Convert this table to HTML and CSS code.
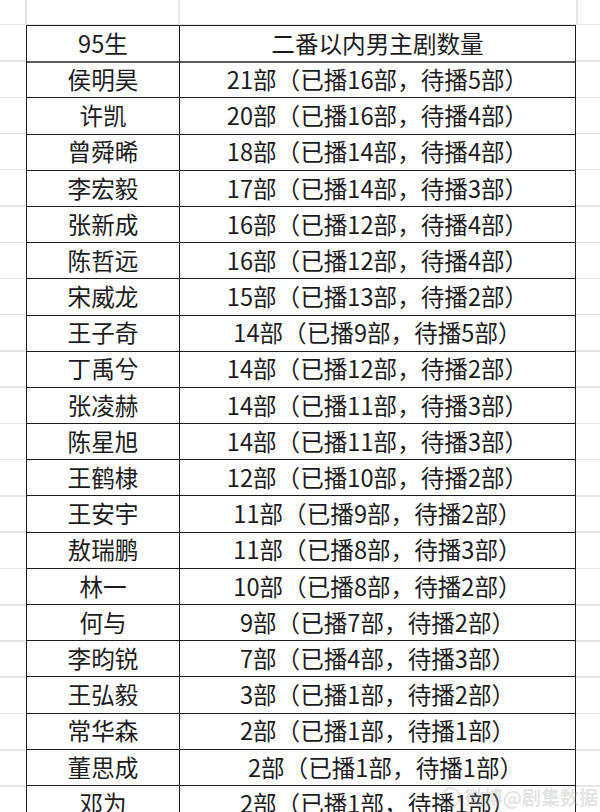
FILE: index.html
```html
<!DOCTYPE html>
<html lang="zh">
<head>
<meta charset="utf-8">
<title>95生 二番以内男主剧数量</title>
<link rel="stylesheet" href="styles.css">
</head>
<body>
<div class="sheet">
  <div class="table">
    <div class="cell head name">95生</div>
    <div class="cell head">二番以内男主剧数量</div>

    <div class="cell name">侯明昊</div><div class="cell">21部（已播16部，待播5部）</div>
    <div class="cell name">许凯</div><div class="cell">20部（已播16部，待播4部）</div>
    <div class="cell name">曾舜晞</div><div class="cell">18部（已播14部，待播4部）</div>
    <div class="cell name">李宏毅</div><div class="cell">17部（已播14部，待播3部）</div>
    <div class="cell name">张新成</div><div class="cell">16部（已播12部，待播4部）</div>
    <div class="cell name">陈哲远</div><div class="cell">16部（已播12部，待播4部）</div>
    <div class="cell name">宋威龙</div><div class="cell">15部（已播13部，待播2部）</div>
    <div class="cell name">王子奇</div><div class="cell">14部（已播9部，待播5部）</div>
    <div class="cell name">丁禹兮</div><div class="cell">14部（已播12部，待播2部）</div>
    <div class="cell name">张凌赫</div><div class="cell">14部（已播11部，待播3部）</div>
    <div class="cell name">陈星旭</div><div class="cell">14部（已播11部，待播3部）</div>
    <div class="cell name">王鹤棣</div><div class="cell">12部（已播10部，待播2部）</div>
    <div class="cell name">王安宇</div><div class="cell">11部（已播9部，待播2部）</div>
    <div class="cell name">敖瑞鹏</div><div class="cell">11部（已播8部，待播3部）</div>
    <div class="cell name">林一</div><div class="cell">10部（已播8部，待播2部）</div>
    <div class="cell name">何与</div><div class="cell">9部（已播7部，待播2部）</div>
    <div class="cell name">李昀锐</div><div class="cell">7部（已播4部，待播3部）</div>
    <div class="cell name">王弘毅</div><div class="cell">3部（已播1部，待播2部）</div>
    <div class="cell name">常华森</div><div class="cell">2部（已播1部，待播1部）</div>
    <div class="cell name">董思成</div><div class="cell shift">2部（已播1部，待播1部）</div>
    <div class="cell name">邓为</div><div class="cell">2部（已播1部，待播1部）</div>
  </div>
  <div class="watermark"><span class="wm-logo"></span>微博@剧集数据</div>
</div>
</body>
</html>
```

FILE: styles.css
```css
html, body {
  margin: 0;
  padding: 0;
  background: #ffffff;
}

.sheet {
  position: relative;
  width: 600px;
  height: 812px;
  overflow: hidden;
  padding-top: 25px;
  box-sizing: border-box;
  background-color: #ffffff;
  background-image:
    linear-gradient(to right, transparent 25px, #e3e3e3 25px, #e3e3e3 27px, transparent 27px,
      transparent 178px, #e8e8e8 178px, #e8e8e8 180px, transparent 180px,
      transparent 576px, #e6e6e6 576px, #e6e6e6 578px, transparent 578px),
    repeating-linear-gradient(to bottom, transparent 0, transparent 24px, #e6e6e6 24px, #e6e6e6 25.5px, transparent 25.5px, transparent 36.25px);
  background-size: 600px 25px, 600px 812px;
  background-repeat: no-repeat, no-repeat;
  font-family: "Noto Sans CJK SC", "Noto Sans", sans-serif;
  color: #1c1c1c;
}

.table {
  margin-left: 26px;
  width: 550px;
  display: grid;
  grid-template-columns: 153px 1fr;
  grid-auto-rows: 36.2px;
  border: 1px solid #1e1e1e;
  border-bottom: none;
  background: #ffffff;
  box-sizing: border-box;
}

.cell {
  box-sizing: border-box;
  display: flex;
  align-items: center;
  justify-content: center;
  border-bottom: 1px solid #1e1e1e;
  font-size: 23.6px;
  line-height: 1;
  white-space: nowrap;
}

.name {
  border-right: 1px solid #1e1e1e;
}

.head {
  height: 37px;
  border-bottom: 2px solid #5a5a5a;
  align-self: start;
}

.table > .head {
  grid-row: 1;
}

.shift {
  padding-left: 16px;
}

.watermark {
  position: absolute;
  right: 2px;
  bottom: 2px;
  display: flex;
  align-items: center;
  gap: 4px;
  font-size: 19px;
  color: rgba(160, 160, 160, 0.3);
  font-weight: 700;
}

.wm-logo {
  width: 16px;
  height: 16px;
  border: 2px solid rgba(160, 160, 160, 0.3);
  border-radius: 50%;
}
```
